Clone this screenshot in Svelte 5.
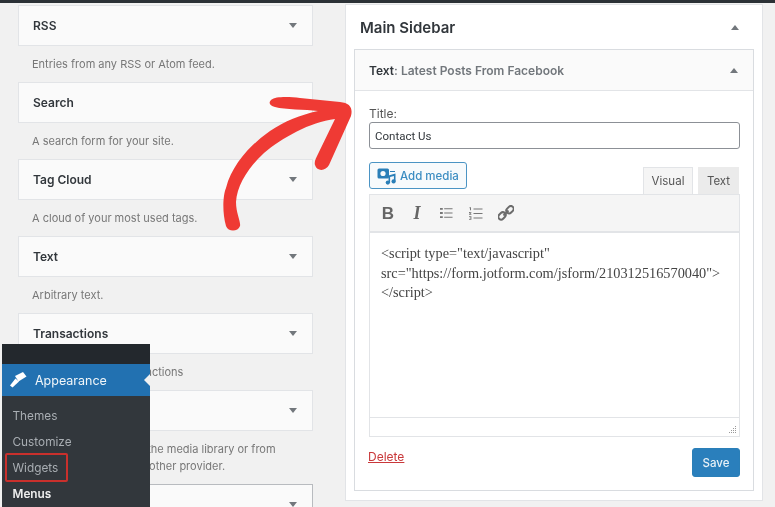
<script lang="ts">
	// names under the admin menu are not visible in the screenshot, so those stay blank
	const widgets = [
		{ name: 'RSS', desc: ['Entries from any RSS or Atom feed.'] },
		{ name: 'Search', desc: ['A search form for your site.'] },
		{ name: 'Tag Cloud', desc: ['A cloud of your most used tags.'] },
		{ name: 'Text', desc: ['Arbitrary text.'] },
		{ name: 'Transactions', desc: ['A full list of your transactions'] },
		{ name: '', desc: ['Displays a video from the media library or from', 'YouTube, Vimeo, or another provider.'] },
		{ name: '', desc: [], active: true }
	];
	const submenu = ['Themes', 'Customize', 'Widgets', 'Menus'];
</script>

<div class="page">
	<div class="topbar"></div>
	<div class="columns">
		<section class="widget-list">
			{#each widgets as w}
				<div class="widget-item">
					<div class="card" class:active={w.active}>
						<span class="card-title">{w.name}</span>
						<svg class="caret" width="8" height="5" viewBox="0 0 10 6"><polygon points="0,0 10,0 5,6" /></svg>
					</div>
					{#each w.desc as line (line)}
						<p class="desc">{line}</p>
					{/each}
				</div>
			{/each}
		</section>

		<section class="sidebar-panel">
			<header class="panel-head">
				<h2>Main Sidebar</h2>
				<svg class="caret" width="8" height="5" viewBox="0 0 10 6"><polygon points="0,6 10,6 5,0" /></svg>
			</header>
			<div class="text-widget">
				<div class="widget-head">
					<span><b>Text</b>: Latest Posts From Facebook</span>
					<svg class="caret" width="8" height="5" viewBox="0 0 10 6"><polygon points="0,6 10,6 5,0" /></svg>
				</div>
				<div class="widget-body">
					<label class="title-label" for="title">Title:</label>
					<input id="title" class="title-input" type="text" value="Contact Us" />

					<div class="media-row">
						<button type="button" class="add-media">
							<svg width="20" height="18" viewBox="0 0 20 18">
								<path d="M2 1.5h8.5a1.5 1.5 0 0 1 1.5 1.5v7a1.5 1.5 0 0 1-1.5 1.5H2A1.5 1.5 0 0 1 .5 10V3A1.5 1.5 0 0 1 2 1.5z" fill="#2a7fb8" />
								<circle cx="6" cy="6.5" r="2.6" fill="#f7fafc" />
								<path d="M13 4h5v1h-5zM11.5 8.5l7-2v8h-1.6V9l-3.8 1v6h-1.6z" fill="#2a7fb8" />
								<circle cx="10.8" cy="15.6" r="2.1" fill="#2a7fb8" />
								<circle cx="16.6" cy="14.4" r="2.1" fill="#2a7fb8" />
							</svg>
							Add media
						</button>
						<div class="tabs">
							<span class="tab current">Visual</span>
							<span class="tab">Text</span>
						</div>
					</div>

					<div class="editor">
						<div class="toolbar">
							<span class="tool bold">B</span>
							<span class="tool italic">I</span>
							<svg class="tool-icon" width="13" height="12" viewBox="0 0 14 12">
								<path d="M0 0.5h3v2H0zM0 5h3v2H0zM0 9.5h3v2H0z" fill="#777" />
								<path d="M4.5 1h9v1h-9zM4.5 5.5h9v1h-9zM4.5 10h9v1h-9z" fill="#777" />
							</svg>
							<svg class="tool-icon" width="14" height="13" viewBox="0 0 14 13">
								<path d="M0.5 0.3h1.5v3H1V1.2H.5zM0 5h2.4v.8H1l1.4 1.2v.8H0V7h1.2L0 5.9zM0 9.3h2.4v3.4H0v-.7h1.5v-.7H.4v-.6h1.1v-.7H0z" fill="#777" />
								<path d="M4.5 1.5h9v1h-9zM4.5 6h9v1h-9zM4.5 10.5h9v1h-9z" fill="#777" />
							</svg>
							<svg class="tool-icon link" width="16" height="16" viewBox="0 0 16 16" fill="none" stroke="#6b6b6b" stroke-width="2">
								<rect x="8" y="0.5" width="8" height="5.6" rx="2.8" transform="rotate(-45 12 3.3) translate(-1 1)" />
								<rect x="0" y="9.5" width="8" height="5.6" rx="2.8" transform="rotate(-45 4 12.3) translate(1 -1)" />
								<path d="M5.5 10.5l5-5" />
							</svg>
						</div>
						<div class="editor-text">
							&lt;script type="text/javascript"<br />
							src="https://form.jotform.com/jsform/210312516570040"&gt;<br />
							&lt;/script&gt;
						</div>
						<div class="statusbar">
							<svg width="10" height="10" viewBox="0 0 10 10" fill="#999">
								<path d="M7 1h1v1H7zM5 3h1v1H5zM7 3h1v1H7zM3 5h1v1H3zM5 5h1v1H5zM7 5h1v1H7zM1 7h1v1H1zM3 7h1v1H3zM5 7h1v1H5zM7 7h1v1H7z" />
							</svg>
						</div>
					</div>

					<div class="actions">
						<a href="#delete" class="delete">Delete</a>
						<button type="button" class="save">Save</button>
					</div>
				</div>
			</div>
		</section>
	</div>

	<nav class="admin-menu">
		<div class="admin-top"></div>
		<div class="admin-current">
			<svg width="18" height="18" viewBox="0 0 18 18" fill="#fff">
				<path d="M6 5L14 1L17.5 5.5L9.5 10.5z" />
				<path d="M6.5 7.5L10 10.5L3.5 16.5L1 14.5z" />
			</svg>
			<span>Appearance</span>
			<i class="notch"></i>
		</div>
		<ul>
			{#each submenu as item (item)}
				<li class:strong={item === 'Menus'} class:marked={item === 'Widgets'}>{item}</li>
			{/each}
		</ul>
	</nav>

	<svg class="arrow" width="775" height="507" viewBox="0 0 775 507">
		<path fill="#ef3a34" d="M271 100C276 96 290 97 300 98L340 102C350 103 353 108 351 116L329 165C326 171 317 172 315 165C314 162 316 158 318 154L335 119C310 122 282 138 264 153C248 168 237 185 236 202C236 213 241 222 240 226C238 232 228 232 226 226C222 212 223 195 226 188C232 165 250 145 270 131C285 121 300 115 318 111C305 109 285 110 275 107C270 106 268 103 271 100Z" />
	</svg>
</div>

<style>
	:global(body) {
		margin: 0;
		background: #f1f1f1;
	}

	.page {
		position: relative;
		width: 775px;
		height: 507px;
		overflow: hidden;
		background: #f1f1f1;
		font-family: Inter, "Liberation Sans", sans-serif;
		color: #444;
		filter: blur(0.45px);
	}

	.topbar {
		height: 3px;
		background: #2b3136;
	}

	.columns {
		display: flex;
		align-items: flex-start;
		padding: 2px 12px 0 18px;
		gap: 32px;
	}

	.widget-list {
		width: 295px;
		flex: none;
	}

	.widget-item {
		margin-bottom: 19px;
	}

	.card {
		display: flex;
		align-items: center;
		justify-content: space-between;
		box-sizing: border-box;
		height: 41px;
		padding: 0 15px 0 14px;
		background: #fafafa;
		border: 1px solid #e2e4e7;
	}

	.card.active {
		border-color: #b8bbbf;
	}

	.card-title {
		font-size: 12px;
		font-weight: 600;
		color: #32373c;
	}

	.caret {
		flex: none;
		fill: #72777c;
	}

	.desc {
		margin: 0;
		padding-left: 14px;
		font-size: 11px;
		line-height: 17px;
		color: #777;
		position: relative;
		top: 10px;
		height: 17px;
	}

	.sidebar-panel {
		box-sizing: border-box;
		width: 418px;
		height: 497px;
		flex: none;
		background: #fff;
		border: 1px solid #e2e4e7;
		padding: 0 8px;
		margin-top: -1px;
	}

	.panel-head {
		display: flex;
		align-items: center;
		justify-content: space-between;
		height: 44px;
		padding: 0 15px 0 6px;
	}

	.panel-head h2 {
		margin: 0;
		font-size: 15px;
		font-weight: 600;
		color: #32373c;
	}

	.text-widget {
		border: 1px solid #d9dce0;
		height: 442px;
		box-sizing: border-box;
	}

	.widget-head {
		display: flex;
		align-items: center;
		justify-content: space-between;
		box-sizing: border-box;
		height: 41px;
		padding: 0 15px 0 14px;
		background: #fafafa;
		border-bottom: 1px solid #e2e4e7;
		font-size: 12px;
		font-weight: 600;
		color: #72777c;
	}

	.widget-head b {
		color: #32373c;
		font-weight: 600;
	}

	.widget-body {
		padding: 15px 14px 0;
	}

	.title-label {
		display: block;
		font-size: 12px;
		line-height: 16px;
		color: #555;
	}

	.title-input {
		display: block;
		box-sizing: border-box;
		width: 371px;
		height: 27px;
		margin: 0 0 13px;
		padding: 1px 5px 0;
		border: 1px solid #8c9096;
		border-radius: 3px;
		background: #fff;
		font: 11.5px Roboto, "Liberation Sans", sans-serif;
		color: #32373c;
	}

	.media-row {
		display: flex;
		align-items: flex-end;
		justify-content: space-between;
		height: 32px;
	}

	.add-media {
		display: flex;
		align-items: center;
		gap: 3px;
		box-sizing: border-box;
		width: 98px;
		height: 27px;
		margin-bottom: 5px;
		padding: 0 0 0 7px;
		background: #f7fafc;
		border: 1px solid #4b94c4;
		border-radius: 3px;
		font: 500 11.5px Inter, "Liberation Sans", sans-serif;
		color: #3c8dc2;
	}

	.tabs {
		display: flex;
		gap: 5px;
	}

	.tab {
		box-sizing: border-box;
		height: 27px;
		width: 41px;
		text-align: center;
		line-height: 28px;
		font-size: 11.5px;
		color: #555;
		background: #ebebeb;
	}

	.tab.current {
		width: 50px;
		background: #f5f5f5;
		border: 1px solid #e2e4e7;
		border-bottom: 0;
		line-height: 27px;
	}

	.editor {
		box-sizing: border-box;
		width: 371px;
		border: 1px solid #e2e4e7;
	}

	.toolbar {
		display: flex;
		align-items: center;
		box-sizing: border-box;
		height: 38px;
		padding-left: 11px;
		background: #f5f5f5;
		border-bottom: 2px solid #e2e4e7;
		color: #666;
	}

	.tool {
		width: 14px;
		text-align: center;
		font-size: 15px;
		line-height: 1;
	}

	.bold {
		font-weight: 700;
		font-size: 17px;
		font-family: "Liberation Sans", sans-serif;
	}

	.italic {
		margin-left: 15px;
		font-family: "Liberation Serif", serif;
		font-style: italic;
		font-weight: 700;
		font-size: 18px;
	}

	.tool-icon {
		margin-left: 16px;
	}

	.tool-icon.link {
		margin-left: 15px;
	}

	.editor-text {
		box-sizing: border-box;
		height: 185px;
		padding: 11px 11px 0;
		background: #fff;
		border-bottom: 1px solid #e2e4e7;
		font: 14.3px/19.5px "Liberation Serif", serif;
		color: #444;
		white-space: nowrap;
	}

	.statusbar {
		display: flex;
		align-items: flex-end;
		justify-content: flex-end;
		box-sizing: border-box;
		height: 18px;
		padding: 0 1px 1px 0;
	}

	.actions {
		display: flex;
		align-items: flex-start;
		justify-content: space-between;
		width: 371px;
		margin-top: 11px;
	}

	.delete {
		margin-top: 2px;
		margin-left: -1px;
		font-size: 12px;
		line-height: 14px;
		color: #c9383a;
		text-decoration: underline;
	}

	.save {
		width: 48px;
		height: 29px;
		padding: 0;
		border: 1px solid #2a7fb8;
		border-radius: 3px;
		background: #2a7fbc;
		font: 500 11.5px Inter, "Liberation Sans", sans-serif;
		color: #e8f1f7;
	}

	.admin-menu {
		position: absolute;
		left: 2px;
		top: 344px;
		width: 148px;
		height: 163px;
		background: #32373c;
	}

	.admin-top {
		height: 20px;
		background: #23282d;
	}

	.admin-current {
		position: relative;
		display: flex;
		align-items: center;
		gap: 8px;
		height: 32px;
		padding-left: 7px;
		background: #2271b1;
		font-size: 12.5px;
		color: #f1f6f9;
	}

	.notch {
		position: absolute;
		right: 0;
		top: 10px;
		border: 6px solid transparent;
		border-right-color: #f1f1f1;
		border-left-width: 0;
	}

	.admin-menu ul {
		list-style: none;
		margin: 7px 0 0;
		padding: 0;
	}

	.admin-menu li {
		position: relative;
		height: 26px;
		padding-left: 10.5px;
		font-size: 11.8px;
		line-height: 26px;
		color: #a9aeb3;
	}

	.admin-menu li.strong {
		font-weight: 600;
		color: #eee;
	}

	.admin-menu li.marked::after {
		content: "";
		position: absolute;
		left: 3px;
		top: -2px;
		width: 63px;
		height: 29px;
		border: 2.5px solid #c9302c;
		border-radius: 2px;
		box-sizing: border-box;
	}

	.arrow {
		position: absolute;
		inset: 0;
		pointer-events: none;
	}
</style>
